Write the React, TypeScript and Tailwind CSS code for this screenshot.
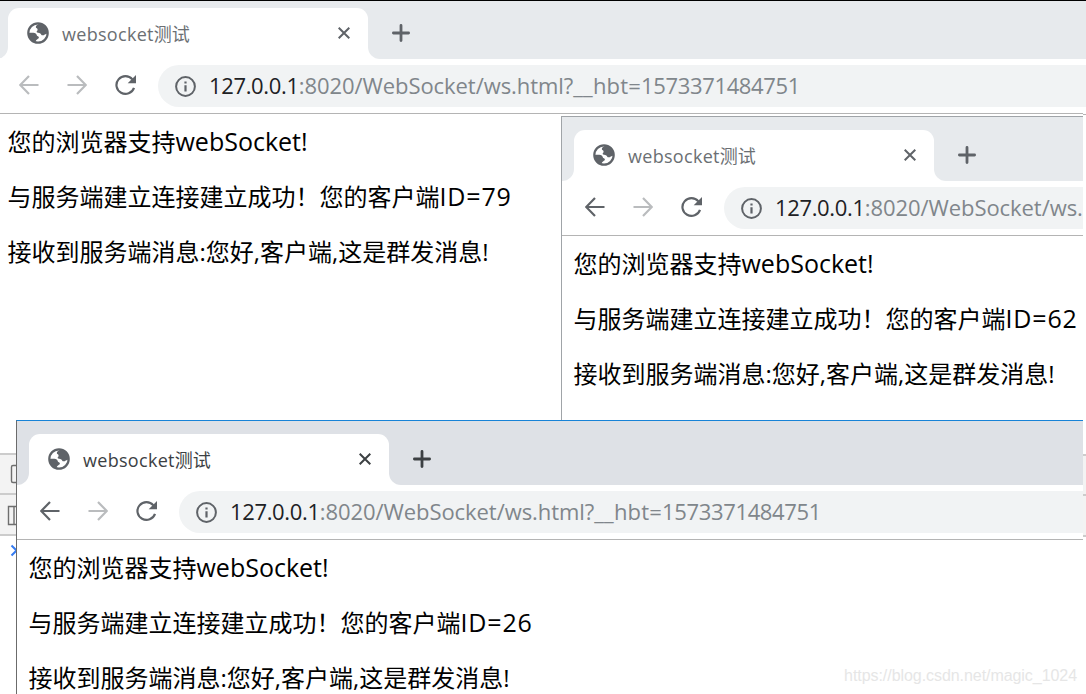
import type { ReactNode } from "react";
import clsx from "clsx";

const UI_FONT = "font-['Open_Sans','Noto_Sans_CJK_SC',sans-serif]";

function GlobeIcon() {
  return (
    <svg viewBox="0 0 22 22" className="size-[22px] shrink-0" fill="none">
      <circle cx="11" cy="11" r="9.7" stroke="#5f6368" strokeWidth="2.2" />
      <path
        d="M12.6 1.5 C9.5 3 8.6 4.2 8.9 5.6 C9.2 6.6 10.6 6.3 10.6 7.4 C10.6 8.8 9.4 9.2 9.6 10.1 C9.9 11.1 12.2 10.6 13.3 11.4 C14.3 12.2 14.2 13.2 15.6 13.3 C17.2 13.4 17.9 11.6 20.8 11.4 C21 6 17.5 2 12.6 1.5 Z"
        fill="#5f6368"
      />
      <path
        d="M1.3 10.8 H6.4 C8 10.8 9.8 12 9.9 13.6 C10 14.5 11.9 14.2 11.9 15.6 C11.9 17 9 17.2 8.4 20.3 C4.4 19.2 1.3 15.6 1.3 10.8 Z"
        fill="#5f6368"
      />
    </svg>
  );
}

function CloseIcon() {
  return (
    <svg viewBox="0 0 12 12" className="size-3" stroke="currentColor" strokeWidth="2">
      <path d="M.7.7l10.6 10.6M11.3.7L.7 11.3" />
    </svg>
  );
}

function PlusIcon() {
  return (
    <svg viewBox="0 0 18 18" className="size-[18px]" stroke="currentColor" strokeWidth="2.8" strokeLinecap="round">
      <path d="M9 1.4v15.2M1.4 9h15.2" />
    </svg>
  );
}

function ArrowIcon({ className }: { className?: string }) {
  return (
    <svg viewBox="0 0 20 20" className={clsx("size-5", className)} fill="none" stroke="currentColor" strokeWidth="2.2">
      <path d="M19.5 10H1.5M10 1L1.2 10l8.8 9" />
    </svg>
  );
}

function ReloadIcon() {
  return (
    <svg viewBox="0 0 22 20" className="h-5 w-[22px]" fill="none">
      <path d="M17.4 4.4A9 8.8 0 1 0 19 12.8" stroke="#5f6368" strokeWidth="2.2" />
      <path d="M21 0v8.3h-8.3z" fill="#5f6368" />
    </svg>
  );
}

function InfoIcon() {
  return (
    <svg viewBox="0 0 21 21" className="size-[21px]" fill="none">
      <circle cx="10.5" cy="10.5" r="9.4" stroke="#5f6368" strokeWidth="2" />
      <path d="M10.5 9.3v6.2M10.5 5.4v2.2" stroke="#5f6368" strokeWidth="2.2" />
    </svg>
  );
}

interface BrowserWindowProps {
  className: string;
  active?: boolean;
  canGoBack?: boolean;
  clientId: number;
}

function BrowserWindow({ className, active, canGoBack, clientId }: BrowserWindowProps) {
  const strip = active ? "bg-[#dee1e6]" : "bg-[#e7eaed]";
  return (
    <section className={clsx("absolute overflow-hidden border-t border-l bg-white", className)}>
      {/* Tab strip */}
      <div className={clsx("flex h-16 items-end", strip)}>
        <div className="h-3 w-3 self-end bg-white">
          <div className={clsx("h-3 w-3 rounded-br-xl", strip)} />
        </div>
        <div className="flex h-[51px] w-[360px] items-center rounded-t-[11px] bg-white pr-[18px] pb-[1.5px] pl-[18.5px]">
          <GlobeIcon />
          <span
            className={clsx(
              "ml-[13.5px] flex-1 pt-[3px] text-[18px] leading-6 whitespace-nowrap",
              active ? "text-[#3c4043]" : "text-[#6b6f73]",
            )}
          >
            <span className="tracking-[0.3px]">websocket</span>测试
          </span>
          <span className={active ? "text-[#3c4043]" : "text-[#5f6368]"}>
            <CloseIcon />
          </span>
        </div>
        <div className="h-[51px] flex-1 bg-white">
          <div
            className={clsx(
              "flex h-full items-center rounded-bl-xl pb-[1.5px] pl-[23.5px]",
              strip,
              active ? "text-[#3c4043]" : "text-[#5f6368]",
            )}
          >
            <PlusIcon />
          </div>
        </div>
      </div>

      {/* Toolbar */}
      <div className="flex h-[55px] items-center border-b border-[#b4b4b4] pl-[23px]">
        <div className="flex items-center gap-7 pb-0.5">
          <ArrowIcon className={canGoBack ? "text-[#5f6368]" : "text-[#babcbe]"} />
          <ArrowIcon className="rotate-180 text-[#babcbe]" />
          <ReloadIcon />
        </div>
        <div className="ml-[21px] flex h-[42px] flex-1 items-center overflow-hidden rounded-l-full bg-[#f1f3f4] pl-[17px]">
          <span className="shrink-0">
            <InfoIcon />
          </span>
          <span className="ml-[13px] pb-0.5 text-[22px] leading-[30px] whitespace-nowrap text-[#80868b]">
            <span className="tracking-[-0.35px] text-[#202124]">127.0.0.1</span>
            <span className="tracking-[-0.06px]">:8020/WebSocket/ws.html?</span>
            <span className="tracking-[0.2px]">__hbt=</span>
            <span className="tracking-[-0.36px]">1573371484751</span>
          </span>
        </div>
      </div>

      {/* Page */}
      <div className="flex flex-col gap-[23px] pt-3 pl-[11.5px] text-2xl leading-8 whitespace-nowrap text-black">
        <p>
          您的浏览器支持<span className="text-[25px] leading-none">webSocket!</span>
        </p>
        <p>
          与服务端建立连接建立成功！您的客户端
          <span className="text-[25px] leading-none tracking-[0.85px]">ID={clientId}</span>
        </p>
        <p>接收到服务端消息:您好,客户端,这是群发消息!</p>
      </div>
    </section>
  );
}

function DevtoolsPanel({ className, children }: { className: string; children?: ReactNode }) {
  return (
    <div className={clsx("absolute h-[83px] border-y-2 border-[#ccc] bg-[#f3f3f3]", className)}>
      <div className="h-10 border-b-2 border-[#ccc]" />
      {children}
    </div>
  );
}

export default function App() {
  return (
    <main className={clsx("relative h-[694px] w-[1086px] overflow-hidden bg-white", UI_FONT)}>
      <BrowserWindow className="-top-1.5 -left-[5px] h-[720px] w-[1088px] border-black" clientId={79} />
      <div className="absolute top-0 left-0 h-px w-full bg-black" />
      <div className="absolute top-px left-[1083px] h-[58px] w-[3px] bg-[#e7eaed]" />
      <div className="absolute top-[65px] left-[1083px] h-[42px] w-[3px] bg-[#f1f3f4]" />
      <div className="absolute top-[114px] left-[1083px] h-px w-[3px] bg-[#b4b4b4]" />

      {/* Docked devtools, peeking out on both sides of the front window */}
      <DevtoolsPanel className="top-[453px] left-0 w-4">
        <svg viewBox="0 0 16 110" className="absolute top-0 left-0 h-[110px] w-4" fill="none">
          <rect x="11.5" y="10.5" width="12" height="17" rx="1.5" stroke="#6e6e6e" strokeWidth="1.4" />
          <path d="M8.5 51.5h12v18h-12zM14 51.5v18" stroke="#6e6e6e" strokeWidth="1.4" />
          <path d="M11.5 90.5l5 5-5 5" stroke="#367cf1" strokeWidth="2" />
        </svg>
      </DevtoolsPanel>
      <DevtoolsPanel className="top-[454px] left-[1083px] w-[3px]" />

      <BrowserWindow className="top-[116px] left-[561px] h-[310px] w-[522px] border-[#a0a4a8]" canGoBack clientId={62} />
      <BrowserWindow
        className="top-[420px] left-4 h-[290px] w-[1067px] border-t-[#1883d7] border-l-[#6b6b6b]"
        active
        canGoBack
        clientId={26}
      />

      <span className="absolute top-[664px] right-[9px] font-['Liberation_Sans',sans-serif] text-base leading-6 tracking-[-0.06px] text-[#e6e6e6]">
        https://blog.csdn.net/magic_1024
      </span>
    </main>
  );
}
